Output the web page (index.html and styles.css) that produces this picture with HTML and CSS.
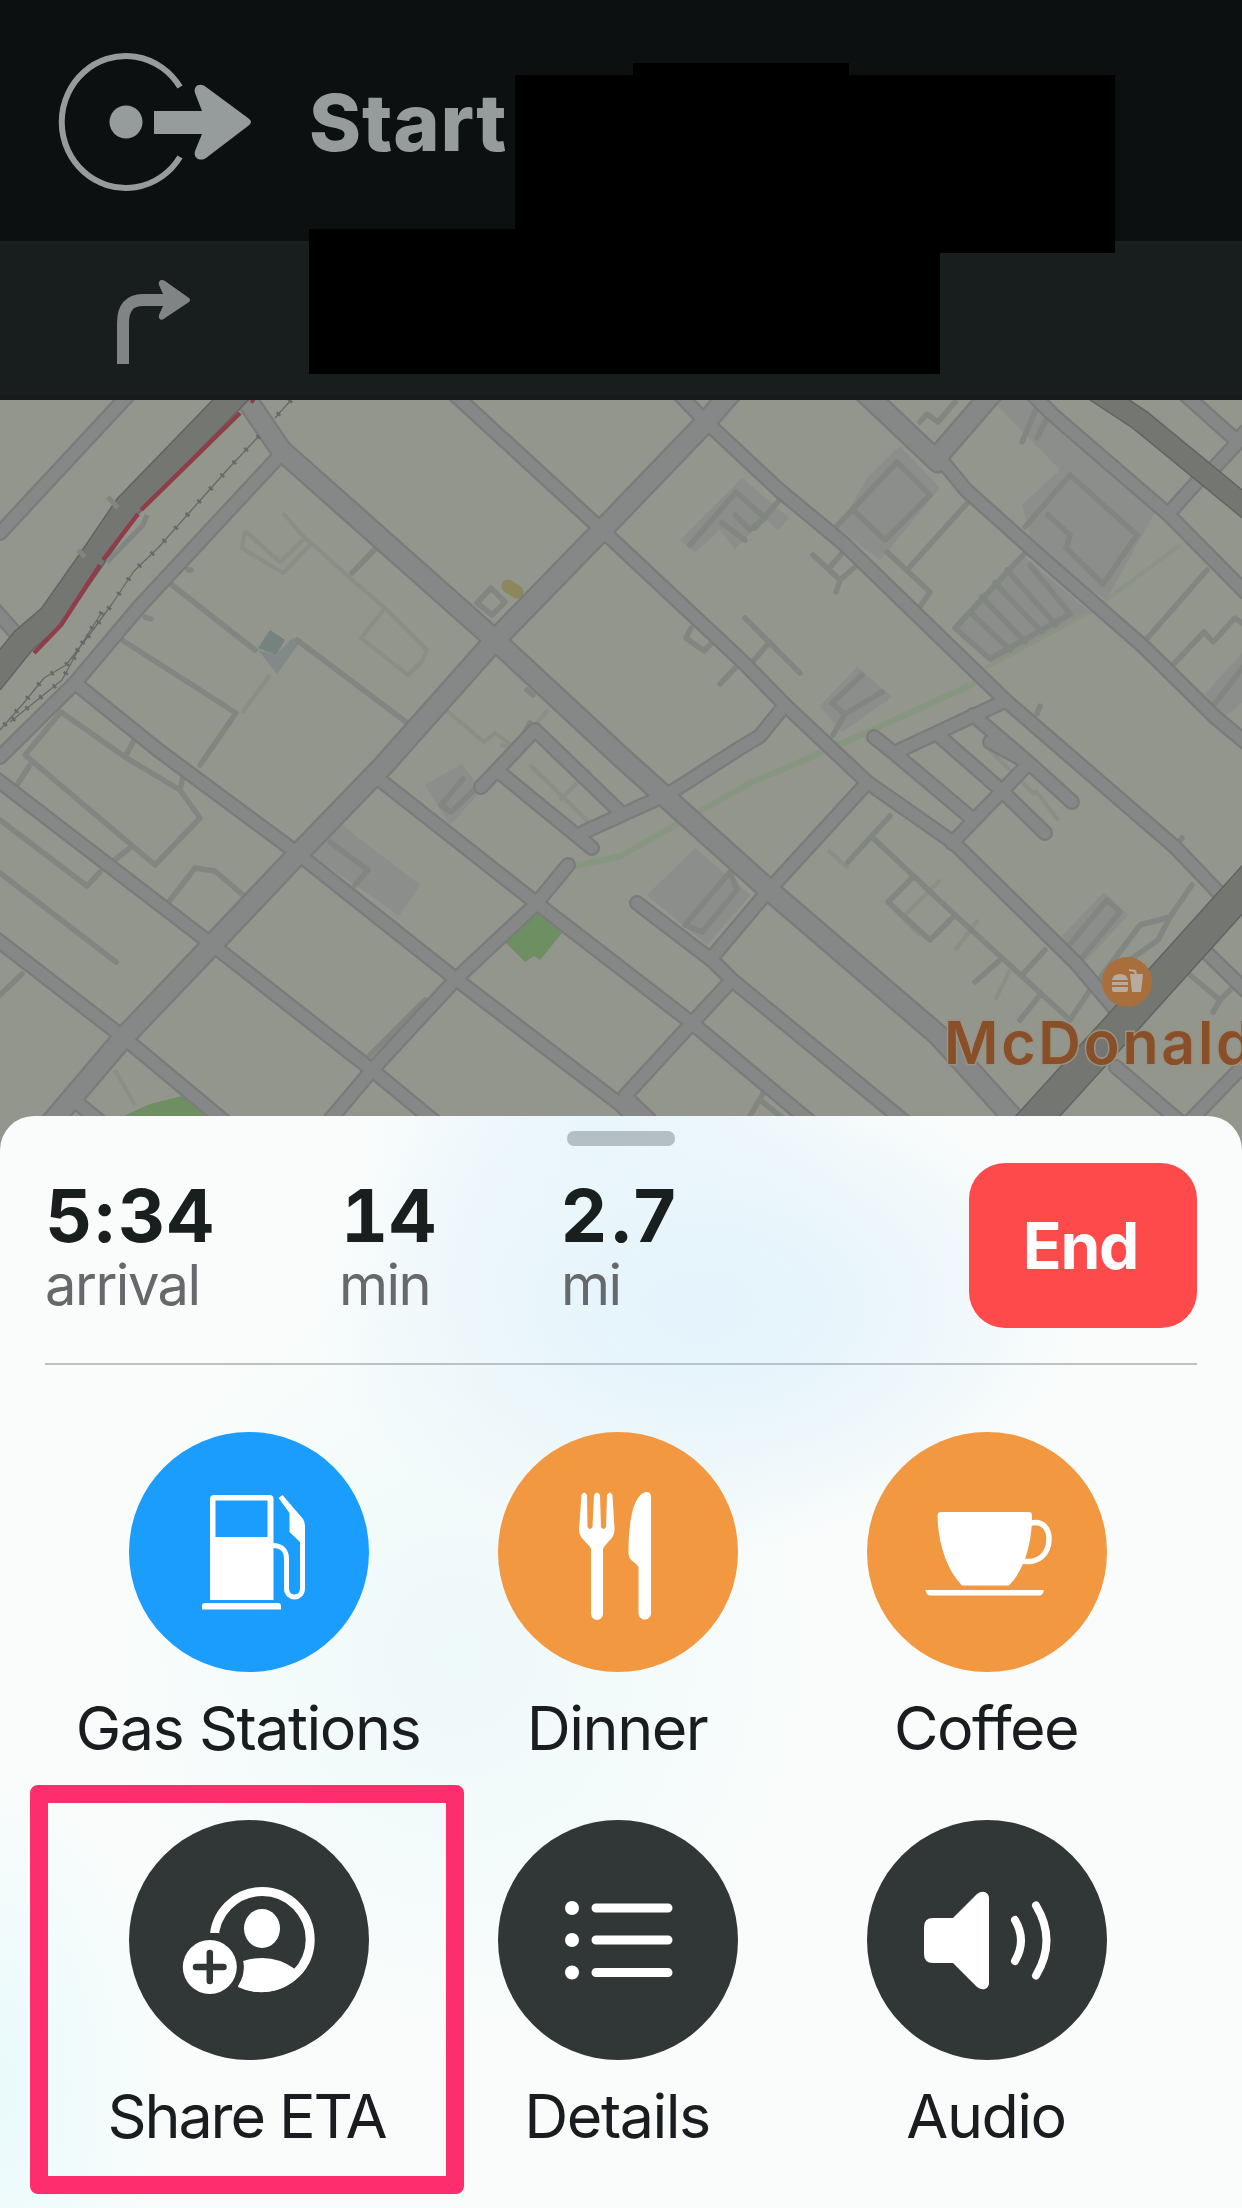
FILE: index.html
```
<!DOCTYPE html>
<html lang="en">
<head>
<meta charset="utf-8">
<title>Navigation</title>
<link rel="stylesheet" href="styles.css">
</head>
<body>
<div class="screen">
  <header class="directions">
    <div class="step step-now">
      <svg class="icon-start" viewBox="50 50 210 142" aria-hidden="true">
        <path d="M180 86A64 66 0 1 0 180 156" fill="none" stroke="currentColor" stroke-width="6"/>
        <circle cx="126" cy="121" r="16.5"/>
        <path d="M154 110H202L195 92C193 85 200 81 206 86L248 117Q254 121 248 125L206 157C200 161 193 157 195 150L202 133H154Z"/>
      </svg>
      <h1 class="step-title">Start</h1>
    </div>
    <div class="step step-next">
      <svg class="icon-turn" viewBox="110 275 90 95" aria-hidden="true">
        <path d="M123 364V323Q123 300 143 300H167" fill="none" stroke="currentColor" stroke-width="12"/>
        <path d="M163 294L159 285C158 280 162 279 165 281L189 298Q191 300 189 302L165 318C162 321 158 320 159 315L163 306Z"/>
      </svg>
    </div>
    <span class="redaction redaction-tab"></span>
    <span class="redaction redaction-top"></span>
    <span class="redaction redaction-bottom"></span>
  </header>

  <svg class="map" viewBox="0 400 1242 750" preserveAspectRatio="none">
    <defs>
      <g id="arterials">
        <path d="M247 400L281 450L495 640L621 757L769 890L938 1035L1024 1130"/>
        <path d="M738 385L704 424L602 530L495 640L384 765L297 855L210 947L123 1038L45 1130"/>
        <path d="M862 390L938 462M995 390L938 456"/>
      </g>
      <g id="streets">
        <path d="M455 395L602 530L744 663L785 705L867 782L954 843L1076 963L1116 1010"/>
        <path d="M675 390L704 420L779 490L843 543L1005 700L1175 847L1219 893"/>
        <path d="M938 456L966 490L1033 550L1144 647L1215 717L1245 742"/>
        <path d="M1028 390L1053 415L1169 515L1245 592M1169 513L1197 482M1180 390L1238 442L1215 467M1236 442L1245 432"/>
        <path d="M133 390L0 533M283 452L139 607L75 683L0 757M-5 610L20 638M75 683L158 750L297 853L457 980L621 1105L640 1125"/>
        <path d="M-5 778L210 943L372 1070L440 1126M-5 938L123 1037L230 1126M80 1105L110 1130M380 780L535 902L692 1023L815 1126"/>
        <path d="M568 865L535 905L457 978L372 1070L325 1126M481 787L535 730L618 810M499 772L592 848M584 832L670 793L740 748L760 736L785 705"/>
        <path d="M867 783L769 890L714 955M732 980L692 1023L625 1096L650 1120M637 903L714 962L732 980L910 1126"/>
        <path d="M1005 701L894 753L874 737M894 753L970 817M938 735L1001 790L1045 833M973 715L1029 763L1072 802M952 843L1029 763M990 742L1029 763"/>
        <path d="M1207 953L1245 990M1116 1067L1185 1126L1245 1064"/>
      </g>
    </defs>
    <rect y="395" width="1242" height="760" fill="#92968d"/>

    <g class="lots">
      <path d="M680 540L742 478L789 518L778 530L765 518L735 549L720 530L695 552Z"/>
      <path d="M866 480L900 446L940 488L880 560L838 528Z"/>
      <path d="M992 400L1040 400L1155 512L1106 600L1035 552L1022 505L1060 470Z"/>
      <path d="M954 628L1022 555L1090 612L992 664Z"/>
      <path d="M820 706L857 667L892 697L842 732Z"/>
      <path d="M425 785L462 764L482 790L450 825ZM310 855L342 825L420 885L399 916L360 888Z"/>
      <path d="M647 895L695 848L750 895L707 945ZM1061 937L1104 892L1128 915L1082 965ZM1205 694L1245 650V700L1220 720Z"/>
    </g>
    <path class="water" d="M258 648L270 630L285 640L276 655Z"/>
    <path class="water-faint" d="M258 650L276 655L292 638L300 642L277 674Z"/>
    <path class="green-line" d="M575 866L621 856L750 783Q830 750 975 683"/>
    <path class="green-faint" d="M985 668L1090 612L1180 545"/>
    <g class="park">
      <path d="M505 942L535 912L562 933L540 960L534 956L525 962Z"/>
      <path d="M115 1120L150 1104L182 1096L210 1120Z"/>
    </g>
    <path class="sand" d="M508 586L517 592"/>

    <g class="paths">
      <path d="M283 513L300 533L350 578L385 608L427 650L422 661L408 675L361 638L385 608M245 531L242 548L283 573L311 544L300 533M245 531L280 562L305 538M446 710L484 742L495 733L515 748M548 710L515 748L500 745"/>
      <path d="M270 675L242 713M828 850L848 868M115 1070L135 1105M960 752L1000 790M990 750L1035 795M1035 790L1058 820M890 905L920 935M940 880L905 915M978 920L955 950M1010 970L995 1000M530 765L595 828M560 800L590 770"/>
    </g>
    <g class="lanes">
      <path d="M172 585L255 650M297 640L406 722M122 640L236 713L200 765M377 547L352 573M25 755L61 712L125 757L180 790L200 818L155 865L25 755M30 765L17 785M125 757L134 740M185 768L180 790M130 848L112 862M0 820L87 886L100 872M0 873L116 962M168 903L195 868L215 871L243 895M22 974L0 995M530 723L520 740M533 695L527 690"/>
      <path d="M477 603L491 588L505 602L492 615ZM690 545L736 492L765 518L750 530L735 515M722 523L745 540M782 497L755 528M835 528L897 462L930 495L885 540L855 512M970 500L907 570M887 552L930 592L920 607M813 555L840 580L855 567M840 580L836 592M845 550L830 567"/>
      <path d="M1025 527L1070 475L1137 535L1103 584L1066 548L1070 535L1048 515M1040 400L1022 442M1050 412L1037 438M1025 553L955 628L990 659L1070 614L1030 565M970 612L1010 650M982 597L1025 642M995 583L1042 632M1007 570L1056 625"/>
      <path d="M1207 570L1144 642M1170 668L1204 632L1213 642L1235 618L1245 625M745 618L800 673M770 642L754 660M738 665L720 684M691 628L686 638L704 651L713 642M862 675L832 703L845 714L882 692M845 714L833 735M1212 707L1245 665M463 779L441 805L451 812L477 787M330 842L368 870L355 885"/>
      <path d="M890 816L848 862M872 837L955 915L1070 1020L1090 990M914 876L888 902L930 940L955 915M1045 950L1022 975M1000 960L975 982M1040 995L1020 1020M730 872L685 925L702 932L737 890ZM1065 950L1107 900L1120 912L1080 960M1192 885L1170 917L1140 925L1095 985M1170 917L1158 940L1130 960M1190 975L1220 1000L1213 1012M1220 1000L1235 985M765 1090L750 1116M760 1100L785 1120M370 1055L425 1000L428 1008M1175 847L1182 838M1037 714L1040 706M188 570L191 570M145 617L151 619M920 422L927 414L938 422L955 402"/>
    </g>

    <g class="road-edge street-edge"><use href="#streets"/></g>
    <g class="road-edge arterial-edge"><use href="#arterials"/></g>
    <g class="road-fill street-fill"><use href="#streets"/></g>
    <g class="road-fill arterial-fill"><use href="#arterials"/></g>

    <path class="highway-edge west" d="M245 385L127 507L91 560L51 617L24 640L-10 682"/>
    <path class="highway west" d="M245 385L127 507L91 560L51 617L24 640L-10 682"/>
    <path class="highway-edge north" d="M1090 387L1140 420L1252 512"/>
    <path class="highway north" d="M1090 387L1140 420L1252 512"/>
    <path class="highway-edge east" d="M1262 868L1116 1030L1027 1128"/>
    <path class="highway east" d="M1262 868L1116 1030L1027 1128"/>
    <path class="ramps" d="M147 515L143 525L107 562M108 497L118 508M78 550L85 557"/>
    <path class="traffic" d="M240 413L141 510M138 514L103 560M100 565L61 625L34 653M251 400L254 402"/>
    <g class="rail">
      <path d="M291 400L275 418M259 436L228 469L204 496L181 522L158 548L134 571L112 604L90 634L66 665L44 678L22 705L0 730M102 612L81 645L62 680L10 722"/>
      <path class="ties" d="M291 400L275 418M259 436L228 469L204 496L181 522L158 548L134 571L112 604L90 634L66 665L44 678L22 705L0 730M102 612L81 645L62 680L10 722"/>
    </g>

    <g class="poi">
      <circle cx="1127" cy="982" r="25"/>
      <path class="poi-glyph" d="M1112 980Q1113 974 1120 974Q1127 974 1128 980ZM1112 982H1128V985H1112ZM1112 987H1128V990Q1128 992 1126 992H1114Q1112 992 1112 990ZM1130 974H1143L1141 992H1132ZM1129 969L1136 970L1137 975H1135L1134 972L1129 971Z"/>
      <text x="944" y="1064" textLength="360">McDonald’s</text>
    </g>
  </svg>

  <main class="sheet">
    <div class="handle"></div>
    <section class="trip">
      <div class="stat stat-arrival"><strong>5:34</strong><span>arrival</span></div>
      <div class="stat stat-time"><strong>14</strong><span>min</span></div>
      <div class="stat stat-distance"><strong>2.7</strong><span>mi</span></div>
      <button class="end">End</button>
    </section>
    <section class="actions">
      <div class="action">
        <svg class="badge blue" viewBox="0 0 240 240">
          <path fill-rule="evenodd" d="M85 63H140.500Q144.500 63 144.500 67V168H81V67Q81 63 85 63ZM86.500 68.500V105H138.500V68.500ZM73 177.500V174Q73 171 76 171H149Q152 171 152 174V177.500Z"/>
          <path class="line" stroke-width="5" d="M144 113.500C153 113.500 157.500 119 157.500 127V156C157.500 168 173.500 168 173.500 156V98"/>
          <path d="M149.500 66L153.500 63L174 87Q176 90 176 94V112L171 110L160.500 100V81Z"/>
        </svg>
        <span class="label">Gas Stations</span>
      </div>
      <div class="action">
        <svg class="badge orange" viewBox="0 0 240 240">
          <path d="M83.500 63Q86 58 89 63L89.500 95Q92 99 94.500 95L96 63Q99 58 102 63L103 95Q105.500 99 108 95L109 63Q112 58 114.500 63L116.500 97C117 107 108 110 105 117V182A6 6 0 0 1 93 182V117C90 110 80.500 107 81 97Z"/>
          <path d="M153 64V182A6.300 6.300 0 0 1 140.500 182V135C137 129 130 130 130.500 119C130.500 98 133 68 145 61Q152 58 153 64Z"/>
        </svg>
        <span class="label">Dinner</span>
      </div>
      <div class="action">
        <svg class="badge orange" viewBox="0 0 240 240">
          <path d="M74 80H162Q165 80 165 84C165 110 158 137 142 153.500H95C79 137 71 110 70.500 84Q70.500 80 74 80ZM58.500 158H177Q176 163.500 172 163.500H64Q59 163.500 58.500 158Z"/>
          <path class="line" stroke-width="5.500" d="M164 91C176 88 182 97 182 107C182 122 171 132 156 129"/>
        </svg>
        <span class="label">Coffee</span>
      </div>
      <div class="action highlighted">
        <svg class="badge dark" viewBox="0 0 240 240">
          <circle class="line" cx="133.200" cy="119.500" r="48" stroke-width="9"/>
          <path class="knock" d="M40 113H90L114 141V152L108 168L118 180H40Z"/>
          <path d="M109 167Q116 155 114 141Q143 132 166 149L169 157A52.500 52.500 0 0 1 109 167Z"/>
          <ellipse cx="133" cy="108.500" rx="18" ry="19.500"/>
          <circle class="knock" cx="80.800" cy="147" r="34"/>
          <circle cx="80.800" cy="147" r="27"/>
          <path class="plus" d="M67 147H94.500M80.800 133V161"/>
        </svg>
        <span class="label label-tight">Share ETA</span>
      </div>
      <div class="action">
        <svg class="badge dark" viewBox="0 0 240 240">
          <circle cx="74" cy="88" r="7"/><circle cx="74" cy="120" r="7"/><circle cx="74" cy="152.500" r="7"/>
          <path class="line" stroke-width="9" d="M98 88H170M98 120H170M98 152.500H170"/>
        </svg>
        <span class="label">Details</span>
      </div>
      <div class="action">
        <svg class="badge dark" viewBox="0 0 240 240">
          <path d="M66 98H86L110 74Q114 71 118 72Q122 74 122 78V163Q122 167 118 169Q114 170 110 167L86 143H66Q57 143 57 134V107Q57 98 66 98Z"/>
          <path class="line" stroke-width="8" d="M148 100Q160 120.500 148 141M169 85.500Q190 120.500 169 155.500"/>
        </svg>
        <span class="label">Audio</span>
      </div>
    </section>
  </main>
</div>
</body>
</html>
```
FILE: styles.css
```
*, *::after { box-sizing: border-box; }
body { margin: 0; background: #92968d; font-family: Inter, "Liberation Sans", sans-serif; }
.screen { width: 1242px; height: 2208px; display: flex; flex-direction: column; overflow: hidden; }

.directions { position: relative; flex: none; height: 400px; }
.step { display: flex; align-items: center; }
.step-now { height: 241px; background: #0c1011; color: #969b9b; padding: 3px 0 0 50px; gap: 49px; }
.step-next { height: 159px; background: #181d1d; color: #808485; padding: 8px 0 0 110px; border-bottom: 5px solid #171a1a; }
.icon-start { width: 210px; height: 142px; fill: currentColor; }
.icon-turn { width: 90px; height: 95px; fill: currentColor; }
.step-title { margin: 0; font-size: 79px; font-weight: 800; line-height: 96px; letter-spacing: 0.8px; }
.redaction { position: absolute; background: #000; }
.redaction-tab { left: 633px; top: 63px; width: 216px; height: 14px; }
.redaction-top { left: 515px; top: 75px; width: 600px; height: 178px; }
.redaction-bottom { left: 309px; top: 229px; width: 631px; height: 145px; }

.map { display: block; flex: none; width: 1242px; height: 750px; }
.map path { fill: none; stroke-linejoin: round; }
.map .lots path { fill: #888b8a; opacity: .75; }
.map .water { fill: #748280; }
.map .water-faint { fill: #818a88; }
.map .green-line { stroke: #869680; stroke-width: 6; }
.map .green-faint { stroke: #8b9384; stroke-width: 4; }
.map .park path { fill: #6d8f62; }
.map .sand { stroke: #8c875c; stroke-width: 13; stroke-linecap: round; }
.paths path { stroke: #8a8e86; stroke-width: 4; }
.lanes path { stroke: #828681; stroke-width: 5.5; stroke-linecap: round; }
.road-edge, .road-fill { stroke-linecap: round; }
.road-edge { stroke: #7a7b7a; }
.road-fill { stroke: #868887; }
.street-edge { stroke-width: 16; }
.street-fill { stroke-width: 11.5; }
.arterial-edge { stroke-width: 23; }
.arterial-fill { stroke-width: 18.5; }
.highway-edge { stroke: #626462; }
.highway { stroke: #747672; }
.highway-edge.west { stroke-width: 27; }
.highway.west { stroke-width: 24; }
.highway-edge.north { stroke-width: 23; }
.highway.north { stroke-width: 20; }
.highway-edge.east { stroke-width: 34; }
.highway.east { stroke-width: 31; }
.ramps { stroke: #828681; stroke-width: 5; }
.traffic { stroke: #8e3d49; stroke-width: 4.5; }
.rail path { stroke: #666a67; stroke-width: 1.3; }
.rail .ties { stroke-width: 5; stroke-dasharray: 2.5 15; }
.poi circle { fill: #a86f3c; }
.map .poi-glyph { fill: #b7aaa0; }
.poi text { font-size: 59px; font-weight: 600; fill: #884f28; stroke: #999181; stroke-width: 3px; paint-order: stroke; }

.sheet {
  position: relative; flex: none; height: 1092px; margin-top: -34px; border-radius: 34px 34px 0 0;
  background:
    radial-gradient(ellipse 390px 250px at 700px 190px, #e4f3fc 0%, #e8f5fb 40%, rgba(240,249,252,0) 100%),
    radial-gradient(ellipse 260px 260px at 600px 10px, #e9f6fd 0%, rgba(240,249,252,0) 100%),
    radial-gradient(ellipse 390px 420px at 460px 540px, #eef9fa 0%, rgba(244,251,251,0) 100%),
    radial-gradient(ellipse 180px 330px at 0 970px, #e9fafb 0%, rgba(244,252,251,0) 100%),
    #fafcfb;
}
.handle { width: 108px; height: 15px; border-radius: 7px; background: #b5bec5; position: relative; margin: 0 auto; top: 15px; }
.trip { display: flex; align-items: flex-start; height: 234px; margin: 0 45px; padding-top: 32px; border-bottom: 2px solid #bbc2c4; }
.stat { display: flex; flex-direction: column; color: #191e1f; padding-top: 13px; }
.stat-arrival { width: 294px; }
.stat-time { width: 222px; }
.stat-time strong { padding-left: 2px; font-variant-numeric: tabular-nums; }
.stat-distance { flex: 1; }
.stat strong { font-size: 73px; line-height: 80px; font-weight: 700; letter-spacing: 0.8px; }
.stat-distance strong { letter-spacing: 2px; }
.stat span { font-size: 56px; line-height: 58px; color: #65696b; font-weight: 400; letter-spacing: -1.5px; }
.end { width: 228px; height: 165px; border: 0; border-radius: 36px; background: #ff4a4c; color: #fff; font: 700 64px/165px Inter, sans-serif; letter-spacing: -1.2px; padding: 0 5px 0 0; }

.actions { display: grid; grid-template-columns: repeat(3, 369px); grid-auto-rows: 388px; margin: 67px 0 0 64.5px; }
.action { position: relative; display: flex; flex-direction: column; align-items: center; }
.badge { width: 240px; height: 240px; border-radius: 50%; fill: #fff; }
.blue { background: #1b9dfe; }
.orange { background: #f19841; }
.dark { background: #313636; }
.badge .line { fill: none; stroke: #fff; stroke-linecap: round; }
.badge .knock { fill: #313636; }
.badge .plus { fill: none; stroke: #313636; stroke-width: 6.500; stroke-linecap: round; }
.label { margin-top: 19px; padding-right: 2px; font-size: 61px; line-height: 74px; color: #1a1d1f; letter-spacing: -1.5px; white-space: nowrap; font-variant-ligatures: none; }
.label-tight { padding-right: 5px; letter-spacing: -2.1px; }
.highlighted::after { content: ""; position: absolute; left: -34.500px; top: -35px; width: 434px; height: 409px; border: 18px solid #fe2d6d; border-radius: 8px; }
```
